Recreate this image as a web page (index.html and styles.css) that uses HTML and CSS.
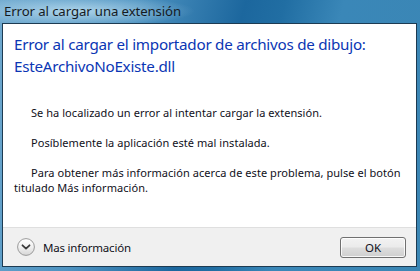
FILE: index.html
```html
<!DOCTYPE html>
<html lang="es">
<head>
<meta charset="utf-8">
<title>Error al cargar una extensión</title>
<link rel="stylesheet" href="styles.css">
</head>
<body>
<div class="window">
  <div class="titlebar"><span class="title">Error al cargar una extensión</span></div>
  <div class="client">
    <div class="content">
      <h1 class="instruction">Error al cargar el importador de archivos de dibujo:<br>EsteArchivoNoExiste.dll</h1>
      <p class="para">Se ha localizado un error al intentar cargar la extensión.</p>
      <p class="para">Posíblemente la aplicación esté mal instalada.</p>
      <p class="para">Para obtener más información acerca de este problema, pulse el botón<br>titulado Más información.</p>
    </div>
    <div class="footer">
      <div class="more">
        <span class="chevron">
          <svg width="18" height="18" viewBox="0 0 18 18">
            <defs>
              <linearGradient id="g" x1="0" y1="0" x2="0" y2="1">
                <stop offset="0" stop-color="#ffffff"/>
                <stop offset="0.5" stop-color="#f0f0f0"/>
                <stop offset="1" stop-color="#d6d6d6"/>
              </linearGradient>
            </defs>
            <circle cx="9" cy="9" r="8.4" fill="url(#g)" stroke="#9a9a9a" stroke-width="1"/>
            <path d="M5.5 7.3 L9 10.6 L12.5 7.3" fill="none" stroke="#3a3a3a" stroke-width="1.8" stroke-linecap="round" stroke-linejoin="round"/>
          </svg>
        </span>
        <span class="more-label">Mas información</span>
      </div>
      <button class="ok">OK</button>
    </div>
  </div>
</div>
</body>
</html>
```
FILE: styles.css
```css
html, body {
  margin: 0;
  padding: 0;
}
body {
  width: 420px;
  height: 271px;
  overflow: hidden;
  font-family: "Noto Sans", "Open Sans", "DejaVu Sans", sans-serif;
}
.window {
  box-sizing: border-box;
  width: 420px;
  height: 271px;
  padding: 0 3px 4px 2px;
  display: flex;
  flex-direction: column;
  background:
    radial-gradient(ellipse 120px 16px at 75px 11px, rgba(200,230,245,0.75), rgba(200,230,245,0) 100%),
    linear-gradient(105deg, #6fa9cf 0%, #4e93c1 28%, #1c679e 50%, #216ea3 58%, #3a87b8 70%, #3b86b4 100%);
}
.titlebar {
  height: 23px;
  flex: none;
  display: flex;
  align-items: center;
  padding-left: 2px;
}
.title {
  font-size: 13.2px;
  color: #151a1f;
  position: relative;
  top: -1px;
  letter-spacing: -0.1px;
}
.client {
  flex: 1;
  display: flex;
  flex-direction: column;
  border: 1px solid #1d3b52;
  background: #ffffff;
}
.content {
  flex: 1;
  padding: 9px 10px 0 11px;
}
.instruction {
  margin: 0;
  font-weight: normal;
  font-size: 15.2px;
  line-height: 22px;
  color: #0b36b4;
  letter-spacing: -0.25px;
}
.para {
  margin: 15px 0 0 0;
  font-size: 11px;
  line-height: 15px;
  color: #10101a;
  text-indent: 17px;
  white-space: nowrap;
  letter-spacing: 0.05px;
}
.instruction + .para {
  margin-top: 28px;
}
.footer {
  height: 38px;
  flex: none;
  border-top: 1px solid #dfdfdf;
  background: #f0f0f0;
  display: flex;
  align-items: center;
  justify-content: space-between;
  padding: 0 10px 0 14px;
}
.more {
  display: flex;
  align-items: center;
  gap: 8px;
}
.chevron {
  display: flex;
  width: 18px;
  height: 18px;
}
.more-label {
  font-size: 11.5px;
  color: #10101a;
  letter-spacing: -0.2px;
}
.ok {
  width: 66px;
  height: 21px;
  padding: 0;
  border: 1px solid #707070;
  border-radius: 3px;
  background: linear-gradient(to bottom, #f2f2f2 0%, #ebebeb 48%, #dddddd 52%, #cfcfcf 100%);
  box-shadow: inset 0 0 0 1px rgba(255,255,255,0.8);
  font-family: "Noto Sans", "Open Sans", sans-serif;
  font-size: 11.5px;
  color: #10101a;
}
```
